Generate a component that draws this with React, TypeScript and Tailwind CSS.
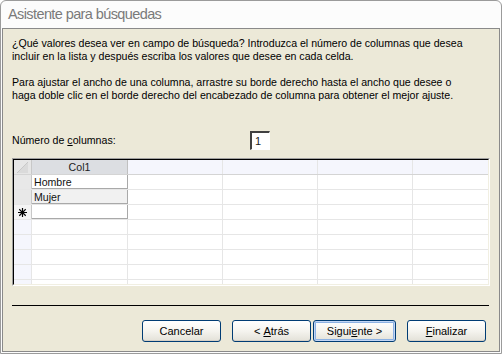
const UNUSED_COLS = [95, 95, 95, 95];
const EXTRA_ROWS = 5;

function SelectAllGlyph() {
  return (
    <svg width="17" height="14" viewBox="0 0 17 14" className="block">
      <polygon points="3,13 14,2 14,13" fill="#dadada" />
      <line x1="3" y1="13" x2="14" y2="2" stroke="#c8c8c8" strokeWidth="1" />
    </svg>
  );
}

function NewRowStar() {
  return (
    <svg width="9" height="9" viewBox="0 0 9 9" className="block">
      <g stroke="#000" strokeWidth="1.2" strokeLinecap="square">
        <line x1="4.5" y1="0.5" x2="4.5" y2="8.5" />
        <line x1="0.5" y1="4.5" x2="8.5" y2="4.5" />
        <line x1="1.7" y1="1.7" x2="7.3" y2="7.3" />
        <line x1="7.3" y1="1.7" x2="1.7" y2="7.3" />
      </g>
    </svg>
  );
}

function UnusedCells({ header }: { header?: boolean }) {
  return (
    <>
      {UNUSED_COLS.map((w, i) => (
        <div
          key={i}
          style={{ width: w }}
          className={`shrink-0 h-full border-r border-[#e6e6e6] ${header ? "bg-[#f5f6fd]" : "bg-white"}`}
        />
      ))}
    </>
  );
}

function DataRow({ label, bg, selector, selectorBg = "bg-[#e8e8e8]" }: { label?: string; bg: string; selector?: React.ReactNode; selectorBg?: string }) {
  return (
    <div className="flex h-[15px] shrink-0 border-b border-[#e6e6e6]">
      <div className={`w-[18px] shrink-0 h-full border-r border-[#c8c8c8] flex items-center justify-center ${selectorBg}`}>
        {selector}
      </div>
      <div
        className={`w-[96px] shrink-0 h-full border-r border-b border-[#a9a9a9] -mb-px px-[2px] leading-[14px] text-[#111] ${bg}`}
      >
        {label}
      </div>
      <UnusedCells />
    </div>
  );
}

function Button({ children, width, isDefault }: { children: React.ReactNode; width: string; isDefault?: boolean }) {
  return (
    <button
      className={`${width} h-[22px] rounded-[3px] border border-[#003c74] bg-gradient-to-b from-white via-[#f5f4ef] to-[#e3e1d8] text-[11px] text-black flex items-center justify-center whitespace-pre ${
        isDefault ? "shadow-[inset_0_0_0_1px_#c3d6f5,inset_0_0_0_2px_#8db2e3]" : "shadow-[inset_0_-1px_0_#d6d0c5]"
      }`}
    >
      {children}
    </button>
  );
}

export default function App() {
  return (
    <div
      className="w-[502px] h-[354px] flex flex-col border border-[#9b9b9b] rounded-t-[6px] bg-[#fcfcfc] overflow-hidden"
      style={{ fontFamily: '"Liberation Sans", Arial, sans-serif' }}
    >
      <div className="h-[27px] shrink-0 flex items-center pl-[7px] text-[14.5px] tracking-[-0.6px] text-[#7a7a7a]">
        Asistente para búsquedas
      </div>

      <div className="flex-1 mx-px mb-px border border-[#8a8a8a] bg-[#ece9d8] flex flex-col pt-[8px] pl-[9px] text-[10.6px] leading-[13px] text-black">
        <p>
          ¿Qué valores desea ver en campo de búsqueda? Introduzca el número de columnas que desea
          <br />
          incluir en la lista y después escriba los valores que desee en cada celda.
        </p>
        <p className="mt-[13px]">
          Para ajustar el ancho de una columna, arrastre su borde derecho hasta el ancho que desee o
          <br />
          haga doble clic en el borde derecho del encabezado de columna para obtener el mejor ajuste.
        </p>

        <div className="mt-[29px] flex items-center h-[19px]">
          <span className="w-[238px]">
            Número de <span className="underline">c</span>olumnas:
          </span>
          <div className="w-[20px] h-[19px] border-t-2 border-l-2 border-r border-b border-t-[#404040] border-l-[#404040] border-r-white border-b-white bg-white flex items-center pl-[3px] text-[11px] text-[#222]">
            1
          </div>
        </div>

        <div className="mt-[8px] w-[478px] h-[128px] border-t border-l border-[#a0a0a0] border-b border-r border-b-white border-r-white">
          <div className="h-full border-t border-l border-black border-b border-r border-b-[#f1efe2] border-r-[#f1efe2] overflow-hidden bg-white flex flex-col">
            <div className="flex h-[15px] shrink-0 border-b border-[#d4d4d4]">
              <div className="w-[18px] shrink-0 h-full bg-[#e6e6e6] border-r border-[#c8c8c8]">
                <SelectAllGlyph />
              </div>
              <div className="w-[96px] shrink-0 h-full bg-[#dcdee2] border-r border-[#c0c0c0] text-center leading-[14px] text-[#222]">
                Col1
              </div>
              <UnusedCells header />
            </div>
            <DataRow label="Hombre" bg="bg-white" />
            <DataRow label="Mujer" bg="bg-[#f1f1f1]" />
            <DataRow bg="bg-white" selectorBg="bg-[#f4f4f4]" selector={<NewRowStar />} />
            {Array.from({ length: EXTRA_ROWS }).map((_, i) => (
              <div key={i} className="flex h-[15px] shrink-0 border-b border-[#e6e6e6]">
                <div className="w-[18px] shrink-0 h-full bg-[#f5f6fd] border-r border-[#e6e6e6]" />
                <div className="w-[96px] shrink-0 h-full bg-white border-r border-[#e6e6e6]" />
                <UnusedCells />
              </div>
            ))}
          </div>
        </div>

        <div className="mt-[19px] w-[477px] h-px bg-black" />

        <div className="mt-[14px] flex items-center pl-[130px]">
          <Button width="w-[79px]">Cancelar</Button>
          <div className="w-[11px]" />
          <Button width="w-[79px]">
            {"< "}
            <span className="underline">A</span>trás
          </Button>
          <div className="w-[2px]" />
          <Button width="w-[83px]" isDefault>
            Sigui<span className="underline">e</span>nte {">"}
          </Button>
          <div className="w-[11px]" />
          <Button width="w-[79px]">
            <span className="underline">F</span>inalizar
          </Button>
        </div>
      </div>
    </div>
  );
}
